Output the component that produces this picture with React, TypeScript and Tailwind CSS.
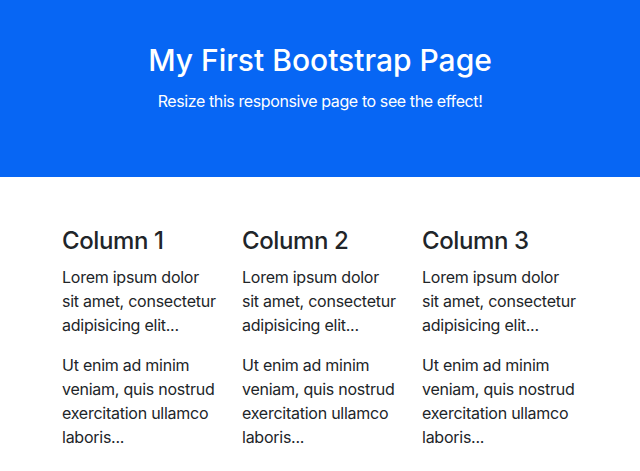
import React from "react";

const cols = ["Column 1", "Column 2", "Column 3"];

export default function App() {
  return (
    <div className="min-h-[471px] bg-white text-[#212529] font-['Inter','Liberation_Sans',sans-serif]">
      <div className="bg-[#0766f4] text-white text-center pt-[42px] pb-12 px-12">
        <h1 className="text-[30px] leading-[36px] font-medium mb-[11px]">My First Bootstrap Page</h1>
        <p className="text-base leading-6 mb-4 tracking-[-0.4px]">Resize this responsive page to see the effect!</p>
      </div>
      <div className="w-[540px] mx-auto mt-[49px] px-3">
        <div className="flex -mx-3">
          {cols.map((c) => (
            <div key={c} className="w-1/3 px-3">
              <h2 className="text-[24px] leading-[29px] font-medium mb-[10px] tracking-[-0.4px]">{c}</h2>
              <p className="text-base leading-6 mb-4 tracking-[-0.25px]">Lorem ipsum dolor sit amet, consectetur adipisicing elit...</p>
              <p className="text-base leading-6 mb-4 tracking-[-0.25px]">Ut enim ad minim veniam, quis nostrud exercitation ullamco laboris...</p>
            </div>
          ))}
        </div>
      </div>
    </div>
  );
}
